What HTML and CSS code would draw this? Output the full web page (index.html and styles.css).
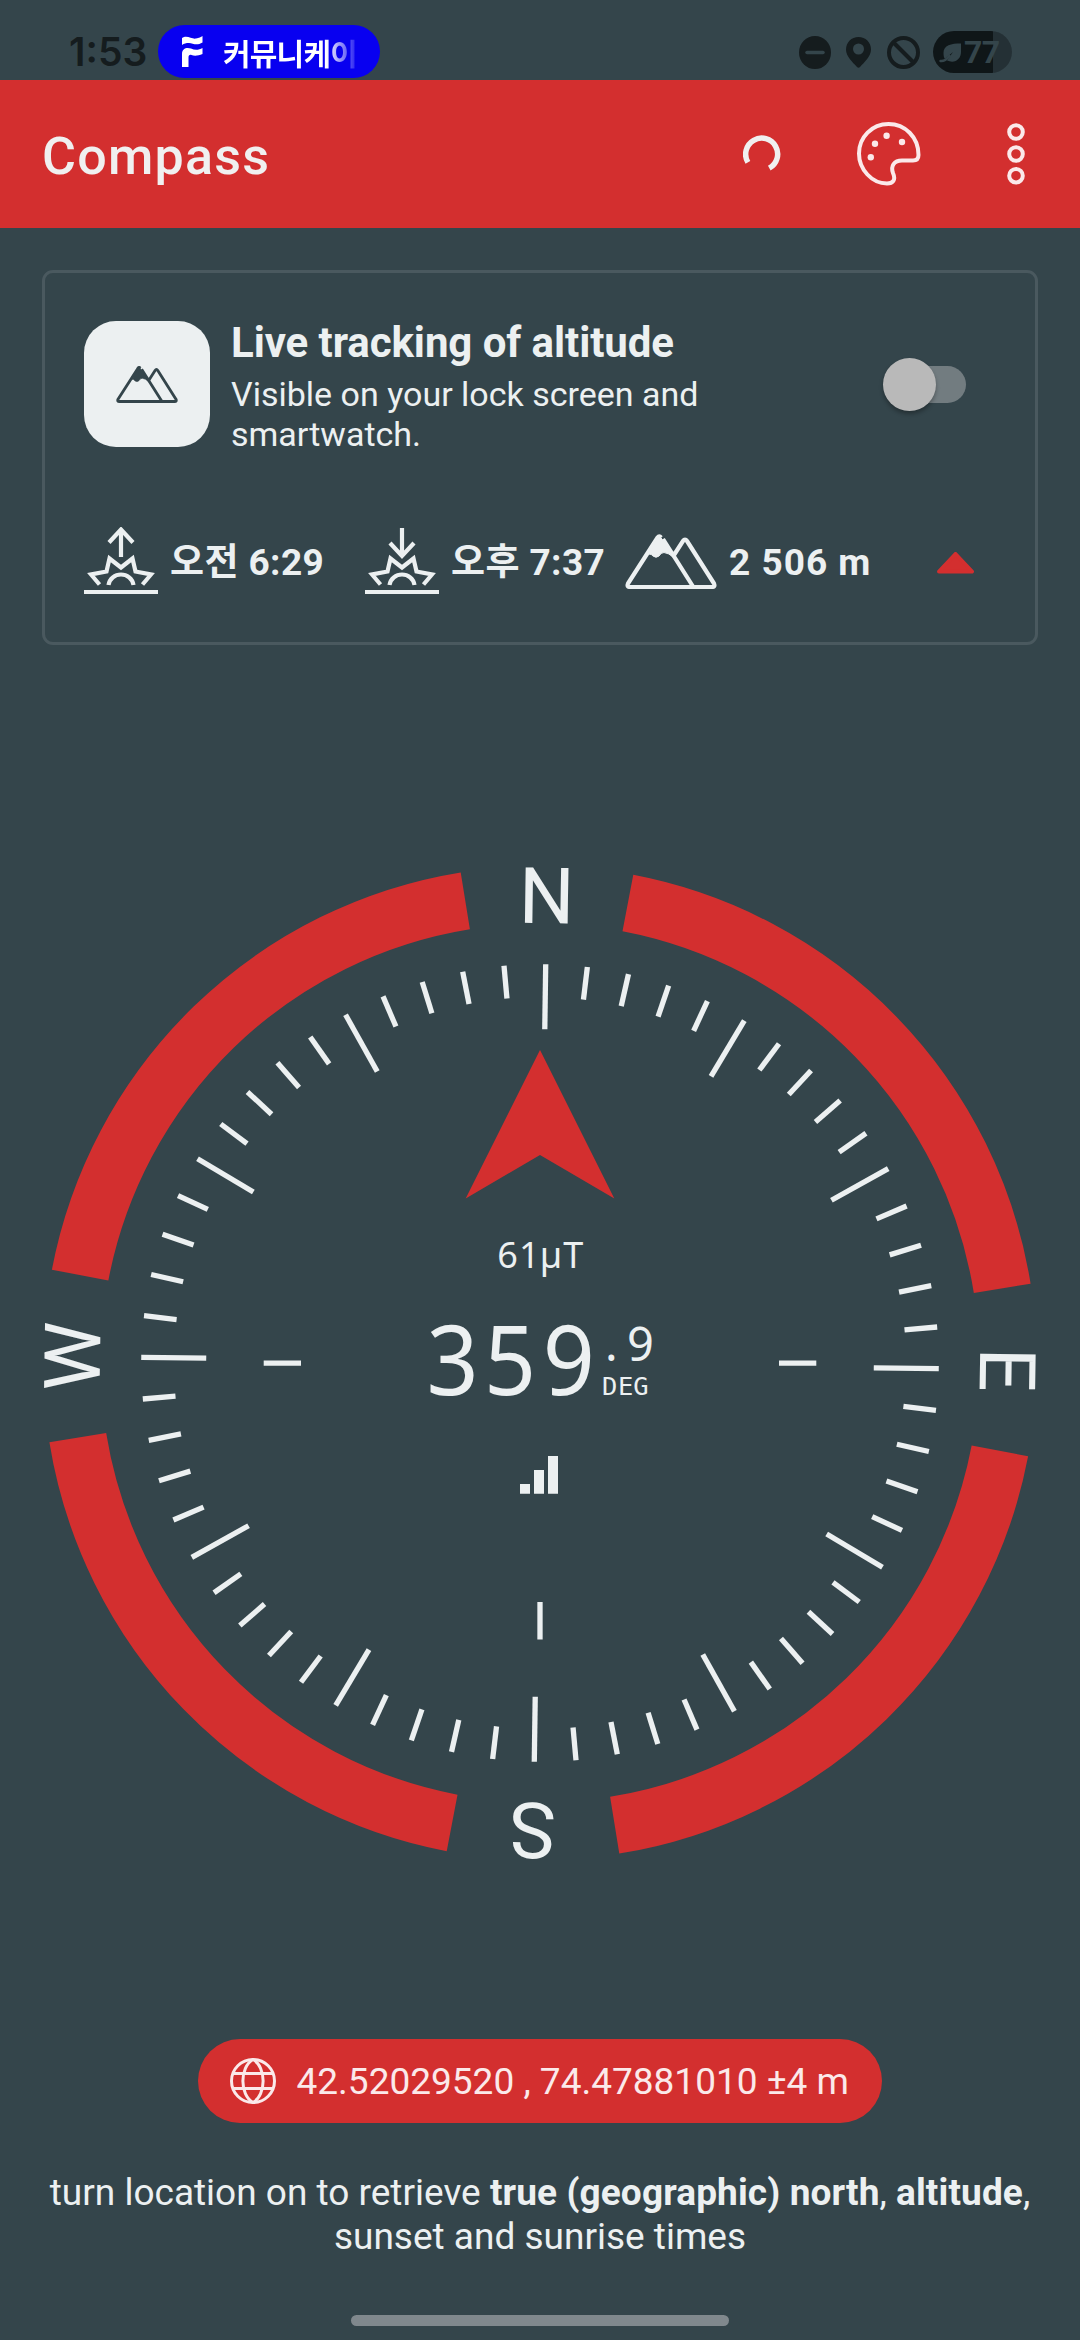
FILE: index.html
```
<!DOCTYPE html>
<html lang="en">
<head>
<meta charset="utf-8">
<title>Compass</title>
<link rel="stylesheet" href="styles.css">
</head>
<body>
<div class="screen">
  <div class="status">
    <span class="clock">1:53</span>
    <div class="chip">
      <svg class="chip-logo" width="21" height="31" viewBox="0 0 21 31"><path d="M0 2C5-1.500 10 3.500 14 2.500 17 2 19 1 20.500 0V6.500C15 10 11 7.500 7 7 4 7 2 7.500 0 9Z"/><path d="M0 31V18C0 12 5 11 9 12.500 13 14.500 17 14 20.500 12V18C16 20 12 20 9.500 19 7.500 18.500 6.500 19.500 6.500 21.500V31Z"/></svg>
      <span class="chip-text">커뮤니케이</span>
    </div>
    <div class="status-icons">
      <svg class="i-dnd" width="32" height="33" viewBox="0 0 32 33"><ellipse cx="16" cy="16.500" rx="16" ry="16.500"/><path class="cut" d="M8 16.500H24"/></svg>
      <svg class="i-pin" width="25" height="31" viewBox="0 0 25 31"><path fill-rule="evenodd" d="M12.500 0C19.500 0 25 5.300 25 12.500 25 19.500 18.500 25 14 30 13 31 12 31 11 30 6.500 25 0 19.500 0 12.500 0 5.300 5.500 0 12.500 0ZM12.500 6.500A5.500 5.500 0 1 0 12.500 17.500 5.500 5.500 0 0 0 12.500 6.500Z"/></svg>
      <svg class="i-ban" width="33" height="33" viewBox="0 0 33 33"><circle cx="16.500" cy="16.500" r="14.500"/><path d="M6.500 6.500L26.500 26.500"/></svg>
      <div class="battery">
        <svg width="23" height="22" viewBox="0 0 23 22"><path class="leaf" d="M22 2.500C12 2.500 4.500 4 4.500 12 4.500 15 5 17 6 18L14 11 8 19.500C16 23 22 18 22 11Z"/><path class="stem" d="M1.500 20C5 20.500 8 18 10.500 15"/></svg>
        <span>77</span>
      </div>
    </div>
  </div>

  <header class="appbar">
    <h1>Compass</h1>
    <svg class="spinner" width="38" height="38" viewBox="0 0 38 38"><path d="M4.900 27.300A16 16 0 1 1 26.300 33.200"/></svg>
    <svg class="palette" width="64" height="64" viewBox="0 0 64 64"><path d="M31.500 2C48 2 61.500 15 61.500 33 61.500 36.500 59.500 38.500 56 38.500H45C37 38.500 33.500 44 36 51 39 58 36 61.500 30 61.500 15 61.500 2 47.500 2 31.500 2 15 15 2 31.500 2Z"/><g class="dots"><circle cx="29.600" cy="13.700" r="3.200"/><circle cx="45" cy="20" r="3.200"/><circle cx="18" cy="21.700" r="3.200"/><circle cx="13.800" cy="35.300" r="3.200"/></g></svg>
    <svg class="more" width="18" height="62" viewBox="0 0 18 62"><circle cx="9" cy="9" r="6.800"/><circle cx="9" cy="31" r="6.800"/><circle cx="9" cy="52.700" r="6.800"/></svg>
  </header>

  <svg class="defs" width="0" height="0">
    <symbol id="mountain" viewBox="0 0 92 56"><path class="ln" d="M38 6L68 53.500M36 4.500Q34.300 2 32.600 4.500L3 50.500Q1.500 54 5 54H87Q90.500 54 89 50.500L62 8Q60 5 58 8L49 22"/><path class="snow" d="M34.300 2L24 21Q26.500 21 28 23 31 25.500 34 23 36 19.500 39 19.500 44 20 48.500 24.500Z"/></symbol>
    <symbol id="sun" viewBox="0 0 74 67"><path d="M15.500 57.500L7 47.500 22.500 44.500 25.500 31.500 37 40.500 48.500 31.500 51.500 44.500 67 47.500 58.500 57.500M24.500 58C25.500 51.500 31 47.500 37 47.500S48.500 51.500 49.500 58M0 65H74"/></symbol>
  </svg>

  <section class="card">
    <div class="track">
      <div class="tile"><svg width="62" height="38"><use href="#mountain"/></svg></div>
      <div class="copy">
        <h2>Live tracking of altitude</h2>
        <p>Visible on your lock screen and<br>smartwatch.</p>
      </div>
      <div class="switch"></div>
    </div>
    <div class="facts">
      <div class="fact sunrise"><svg class="sun" width="74" height="67" viewBox="0 0 74 67"><use href="#sun"/><path d="M37 30V3M25 15.500L37 2.500 49 15.500"/></svg><span>오전 6:29</span></div>
      <div class="fact sunset"><svg class="sun" width="74" height="67" viewBox="0 0 74 67"><use href="#sun"/><path d="M37 1V28M25 16L37 29 49 16"/></svg><span>오후 7:37</span></div>
      <div class="fact altitude"><svg class="mt" width="92" height="56"><use href="#mountain"/></svg><span>2 506 m</span></div>
      <svg class="caret" width="37" height="22" viewBox="0 0 37 22"><path d="M18.500 2L35 19.500H2Z"/></svg>
    </div>
  </section>

  <svg class="compass" width="1080" height="1394" viewBox="0 645 1080 1394">
    <defs>
      <g id="sector">
        <path d="M0-398.800V-333.800"/>
        <path d="M0-398.800V-366" transform="rotate(6)"/>
        <path d="M0-398.800V-366" transform="rotate(12)"/>
        <path d="M0-398.800V-366" transform="rotate(18)"/>
        <path d="M0-398.800V-366" transform="rotate(24)"/>
      </g>
      <path id="arc" d="M81.300-461.100A468.200 468.200 0 0 1 461.100-81.300"/>
    </defs>
    <g transform="translate(540 1363) rotate(0.820)">
      <g class="ring">
        <use href="#arc"/><use href="#arc" transform="rotate(90)"/><use href="#arc" transform="rotate(180)"/><use href="#arc" transform="rotate(270)"/>
      </g>
      <g class="ticks">
        <use href="#sector"/><use href="#sector" transform="rotate(30)"/><use href="#sector" transform="rotate(60)"/><use href="#sector" transform="rotate(90)"/><use href="#sector" transform="rotate(120)"/><use href="#sector" transform="rotate(150)"/><use href="#sector" transform="rotate(180)"/><use href="#sector" transform="rotate(210)"/><use href="#sector" transform="rotate(240)"/><use href="#sector" transform="rotate(270)"/><use href="#sector" transform="rotate(300)"/><use href="#sector" transform="rotate(330)"/>
      </g>
      <g class="cardinal">
        <text y="-440">N</text>
        <text y="-440" transform="rotate(90)">E</text>
        <text y="-440" transform="rotate(180)">S</text>
        <text y="-440" transform="rotate(270)">W</text>
      </g>
    </g>
    <path class="needle" d="M540 1050L614.300 1198.500 540 1155 465.700 1198.500Z"/>
    <path class="marks" d="M263.700 1363.200H301M779 1363.200H816.300M540 1602V1639.500"/>
    <text class="field" x="507.600 529.200 551 573.300" y="1267.500">61µT</text>
    <text class="degrees" transform="translate(510 1395) scale(0.940 1)" x="-61 0 62.500" y="0">359</text>
    <text class="tenths" x="611.300 640.500" y="1360.500">.9</text>
    <text class="unit" x="609.700 625.800 641" y="1395">DEG</text>
    <path class="bars" d="M520 1484H530V1493.700H520ZM534 1470H544V1493.700H534ZM548 1456H558V1493.700H548Z"/>
  </svg>

  <div class="coords">
    <svg width="46" height="46" viewBox="0 0 46 46"><circle cx="23" cy="23" r="21.500"/><path d="M3.500 15.500H42.500M3.500 30.500H42.500M23 1.500C9.500 9 9.500 37 23 44.500 36.500 37 36.500 9 23 1.500Z"/></svg>
    <span>42.52029520 , 74.47881010 ±4 m</span>
  </div>
  <p class="hint">turn location on to retrieve <b>true (geographic) north</b>, <b>altitude</b>,<br>sunset and sunrise times</p>
  <div class="homebar"></div>
</div>
</body>
</html>
```
FILE: styles.css
```
* { box-sizing: border-box; margin: 0; padding: 0; }
body { background: #34454b; font-family: Roboto, "Noto Sans CJK KR", sans-serif; color: #ecf0f1; }
svg { display: block; fill: none; flex: none; }
.screen { width: 1080px; height: 2340px; display: flex; flex-direction: column; overflow: hidden; }
.defs { position: absolute; }

.status { height: 80px; display: flex; align-items: flex-start; padding: 25px 68px 0 69px; }
.clock { font: 600 39px/47px Inter, sans-serif; color: #151c1e; width: 89px; padding-top: 3px; white-space: nowrap; }
.chip { width: 222px; height: 53px; border-radius: 27px; background: #0800f0; display: flex; align-items: center; padding-left: 24px; gap: 20px; }
.chip-logo { fill: #fff; }
.chip-text { font: 700 30px/44px "Noto Sans CJK KR", sans-serif; letter-spacing: -.8px; white-space: nowrap; width: 134px; overflow: hidden; background: linear-gradient(90deg, #fff 77%, rgba(255, 255, 255, .1) 100%); -webkit-background-clip: text; background-clip: text; color: transparent; }
.status-icons { margin-left: auto; display: flex; align-items: center; height: 54px; }
.i-dnd, .i-pin { fill: #151c1e; }
.i-dnd .cut { stroke: #34454b; stroke-width: 3.5; stroke-linecap: round; }
.i-pin { margin-left: 15.5px; }
.i-ban { margin: 0 13px 0 16px; stroke: #151c1e; stroke-width: 4; }
.battery { width: 79px; height: 42px; border-radius: 21px; background: linear-gradient(90deg, #0f1618 60px, #243035 60px); display: flex; align-items: center; padding-left: 6px; gap: 2px; color: #34454b; font: 700 32px/42px Roboto, sans-serif; letter-spacing: -.5px; }
.battery .leaf { fill: #34454b; }
.battery .stem { stroke: #34454b; stroke-width: 2.5; stroke-linecap: round; }

.appbar { height: 148px; background: #d32f2f; display: flex; align-items: center; padding: 0 55px 0 42px; color: #f0f0f0; }
.appbar h1 { font-weight: 500; font-size: 52px; line-height: 61px; letter-spacing: 1.25px; margin-right: auto; padding-top: 4px; }
.spinner { stroke: #f0f0f0; stroke-width: 5.500; margin-right: 76.500px; }
.palette { stroke: #fbe9ea; stroke-width: 4; stroke-linejoin: round; margin-right: 86px; }
.palette .dots { fill: #fbe9ea; stroke: none; }
.more { stroke: #fbe9ea; stroke-width: 4; }

.card { margin: 42px 42px 0; height: 375px; border: 3px solid #4a595f; border-radius: 11px; padding: 48px 59px 0 39px; }
.track { display: flex; height: 126px; align-items: center; }
.tile { width: 126px; height: 126px; border-radius: 32px; background: #ecf0f1; color: #34454b; display: flex; align-items: center; justify-content: center; }
.ln { stroke: currentColor; stroke-width: 4.200; stroke-linejoin: round; }
.snow { fill: currentColor; stroke: currentColor; stroke-width: 1; stroke-linejoin: round; }
.copy { align-self: flex-start; margin: -3px 0 0 21px; }
.copy h2 { font-weight: 700; font-size: 42px; line-height: 49px; letter-spacing: -.08px; }
.copy p { font-size: 34px; line-height: 40px; margin-top: 7px; }
.switch { margin: 0 10px 0 auto; width: 71px; height: 37px; border-radius: 19px; background: #727c80; display: flex; align-items: center; }
.switch::before { content: ""; flex: none; width: 53px; height: 53px; border-radius: 50%; margin-left: -12px; background: #b9b9b9; box-shadow: 0 3px 4px rgba(0, 0, 0, .3); }
.facts { display: grid; grid-template-columns: 281px 260px 1fr auto; align-items: center; height: 67px; margin-top: 80px; margin-right: 2px; }
.fact { display: flex; align-items: center; white-space: nowrap; gap: 12px; font-weight: 700; font-size: 37px; line-height: 43px; letter-spacing: 1px; }
.fact span { padding-top: 3px; }
.sunrise span, .sunset span { letter-spacing: .4px; }
.sun { stroke: #ecf0f1; stroke-width: 4.200; }
.caret { fill: #d32f2f; stroke: #d32f2f; stroke-width: 4; stroke-linejoin: round; margin-top: 4px; }

.compass text { fill: #ecf0f1; text-anchor: middle; }
.ring { stroke: #d32f2f; stroke-width: 57.500; }
.ticks, .marks { stroke: #ecf0f1; stroke-width: 5.300; }
.cardinal { font: 400 78px Roboto, sans-serif; }
.needle { fill: #d32f2f; }
.bars { fill: #ecf0f1; }
.field { font: 400 36px "Noto Sans", sans-serif; }
.degrees { font: 400 97px "Noto Sans", sans-serif; }
.tenths { font: 400 47px "Noto Sans", sans-serif; }
.unit { font: 400 25.500px "DejaVu Sans Mono", monospace; }

.coords { align-self: center; width: 684px; height: 84px; border-radius: 42px; background: #d32f2f; color: #fbe9ea; display: flex; align-items: center; padding-left: 32px; gap: 20.500px; font-size: 37px; line-height: 43px; white-space: nowrap; }
.coords svg { stroke: #fbe9ea; stroke-width: 3; }
.hint { margin-top: 48px; text-align: center; font-size: 37px; line-height: 43.500px; white-space: nowrap; }
.hint b { letter-spacing: .12px; }
.homebar { width: 378px; height: 11px; border-radius: 6px; background: #80888d; margin: auto auto 14px; }
```
